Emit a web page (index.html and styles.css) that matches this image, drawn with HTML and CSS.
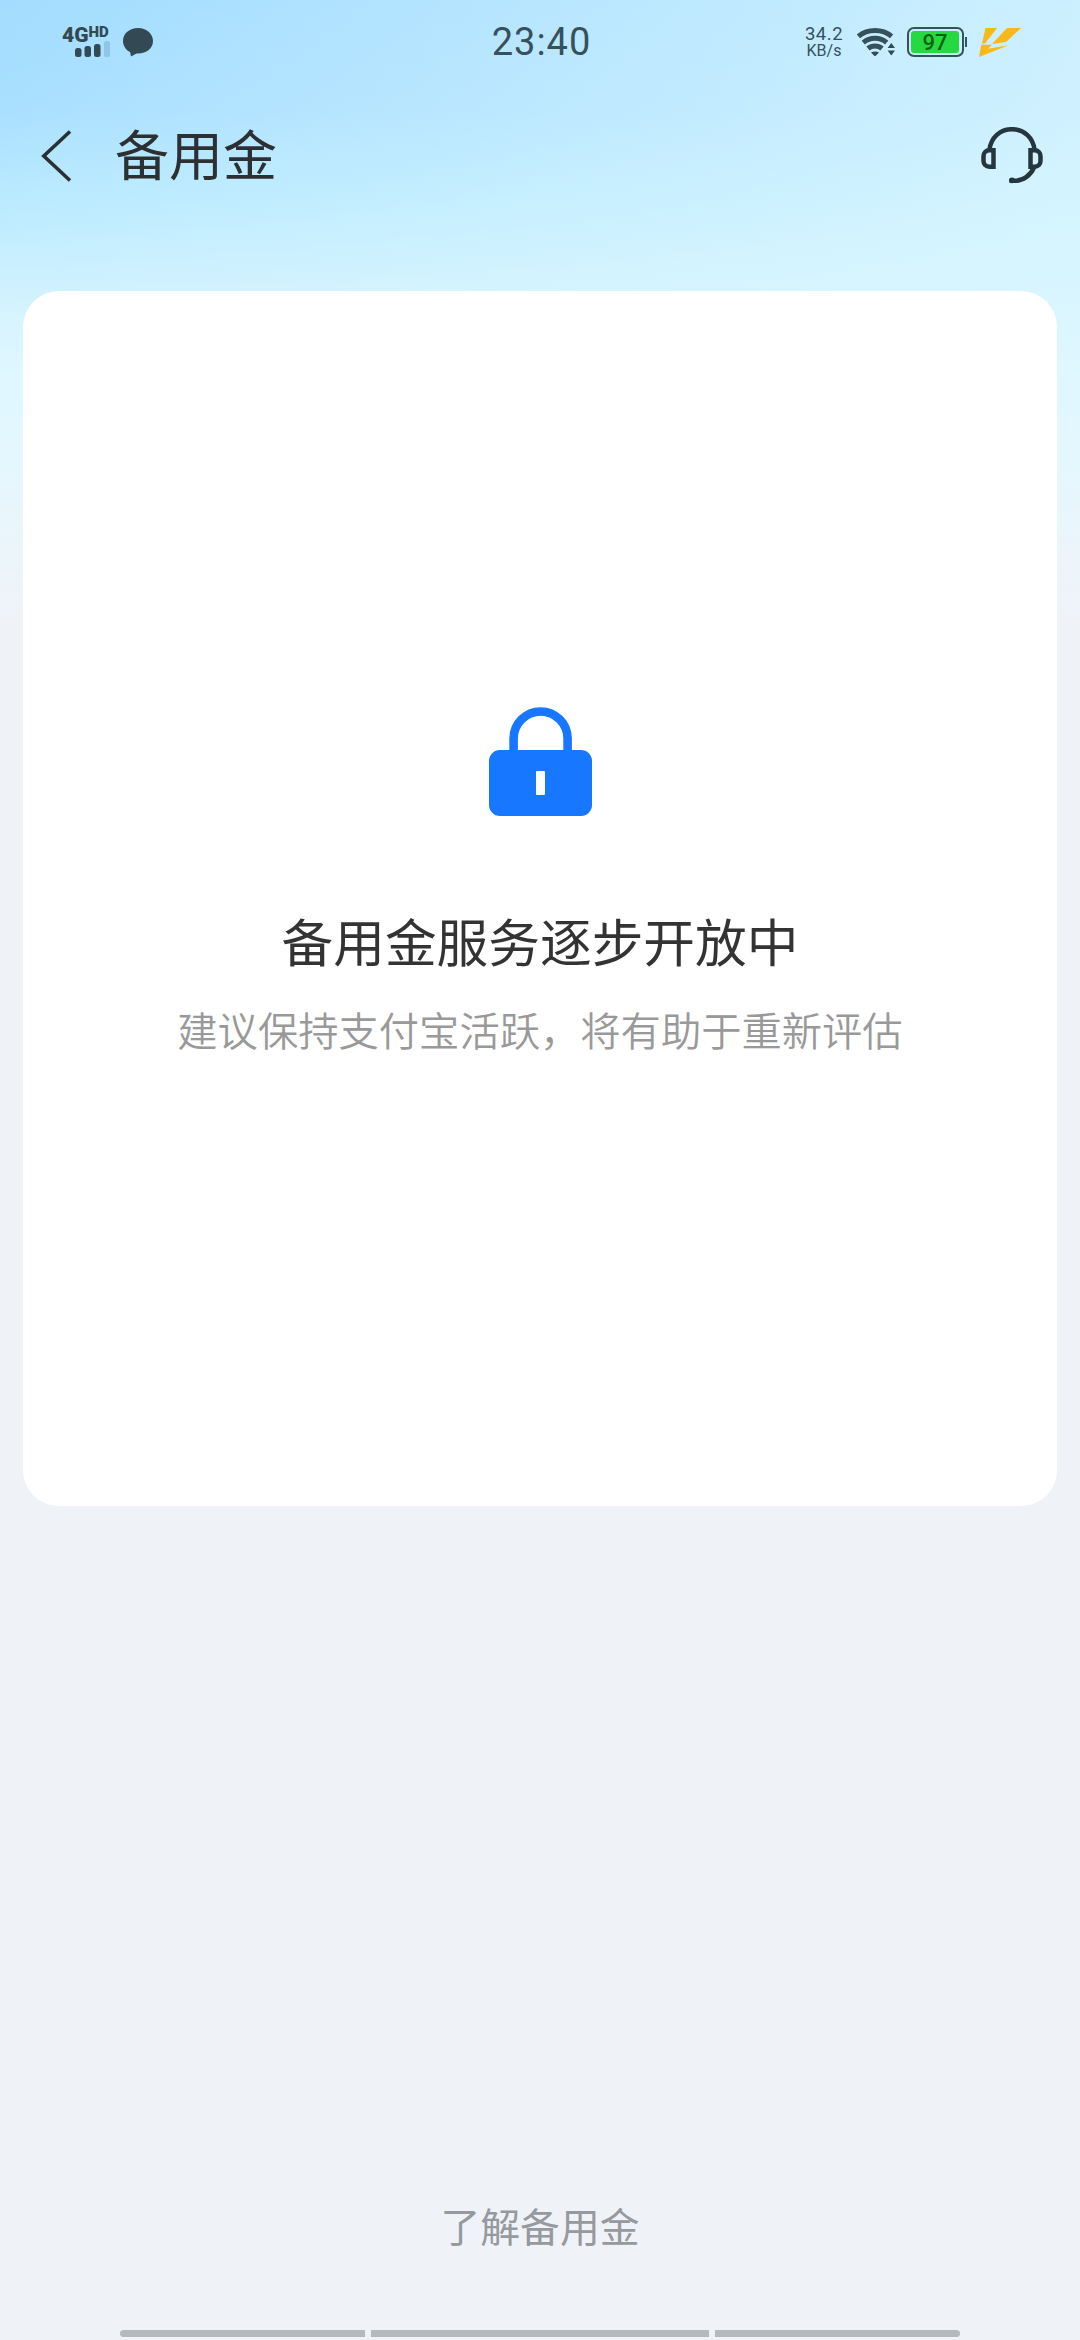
FILE: index.html
```
<!DOCTYPE html>
<html lang="zh-CN">
<head>
<meta charset="utf-8">
<title>备用金</title>
<link rel="stylesheet" href="styles.css">
</head>
<body>
<div class="screen">
  <header class="top">
    <div class="status">
      <div class="status-left">
        <div class="signal">
          <div class="network">4G<span class="hd">HD</span></div>
          <svg class="bars" width="36" height="17" viewBox="0 0 36 17">
            <rect x="0" y="7" width="6.500" height="9" rx="2.500"/>
            <rect x="9.500" y="5" width="6.500" height="11" rx="2.500"/>
            <rect x="19" y="3" width="6.500" height="13" rx="2.500"/>
            <rect class="bar-off" x="29" y="0" width="6" height="16" rx="2.500"/>
          </svg>
        </div>
        <svg class="bubble" width="30" height="29" viewBox="0 0 30 29">
          <path d="M15 0C6.500 0 0 5.500 0 13c0 4.800 2.800 9 7.200 11.200L8 28.500l5.500-3.100 1.500.1c8.500 0 15-5.200 15-12.500S23.500 0 15 0Z"/>
        </svg>
      </div>
      <div class="clock">23:40</div>
      <div class="status-right">
        <div class="speed"><span class="rate">34.2</span><span class="unit">KB/s</span></div>
        <svg class="wifi" width="38" height="28" viewBox="0 0 38 28">
          <g fill="none" stroke="#36505c" stroke-width="5">
            <path d="M1.400 8.400C10.500 .6 25.500 .6 34.600 8.400"/>
            <path d="M6.300 14.600c6.600-5.700 16.800-5.700 23.400 0"/>
            <path d="M11 20.500c4-3.500 10-3.500 14 0"/>
          </g>
          <path d="M14 24.600c2.500-1.500 5.500-1.500 8 0L18 28.500Z"/>
          <path d="M29.500 14.500h8.500V28h-8.500z" fill="#caefff"/>
          <path d="M34.300 15l3.700 5h-7.400ZM30.600 22.500H38l-3.700 5Z"/>
        </svg>
        <div class="battery"><div class="charge">97</div></div>
        <svg class="bolt" width="42" height="29" viewBox="0 0 42 29">
          <path d="M6.500 0H18L6 15.500H3ZM28 0H42L27 14 13 16ZM2.300 16.800H13L9 20.800 29.500 17.200 0 29Z"/>
        </svg>
      </div>
    </div>
    <nav class="navbar">
      <svg class="back" width="31" height="52" viewBox="0 0 31 52"><path d="M29 1.500 2.800 26 29 50.500"/></svg>
      <h1 class="title">备用金</h1>
      <svg class="service" width="62" height="58" viewBox="0 0 62 58">
        <path d="M8.500 22.500C10 10.500 19 2.200 31 2.200s21 8.300 22.500 20.300"/>
        <path d="M12.500 23.300v16.400H8.500c-3.800 0-6-2.500-6-6v-4.400c0-3.500 2.200-6 6-6ZM49.500 23.300v16.400h4c3.800 0 6-2.500 6-6v-4.400c0-3.500-2.200-6-6-6Z"/>
        <path d="M53 40.500c-3.500 8-11 13.200-19 13.200h-5.500"/>
        <circle class="mic" cx="31" cy="53.300" r="2.900"/>
      </svg>
    </nav>
  </header>
  <main class="card">
    <svg class="lock" width="103" height="109" viewBox="0 0 103 109">
      <path d="M24.600 46V31.500a27 27 0 0 1 54 0V46" fill="none" stroke="#1777ff" stroke-width="8.600"/>
      <rect y="43" width="103" height="66" rx="11" fill="#1777ff"/>
      <rect x="47" y="64" width="9" height="24" rx="1" fill="#fff"/>
    </svg>
    <h2 class="heading">备用金服务逐步开放中</h2>
    <p class="hint">建议保持支付宝活跃，将有助于重新评估</p>
  </main>
  <footer class="footer">
    <a class="learn">了解备用金</a>
    <div class="gestures"><i></i><i></i><i></i></div>
  </footer>
</div>
</body>
</html>
```
FILE: styles.css
```
* { box-sizing: border-box; margin: 0; padding: 0; }
body { font-family: "Noto Sans CJK SC", sans-serif; }
svg { display: block; flex: none; }

.screen {
  width: 1080px;
  height: 2340px;
  display: flex;
  flex-direction: column;
  overflow: hidden;
  background:
    linear-gradient(180deg, rgba(224, 247, 255, 0) 0, rgba(224, 247, 255, 0) 290px, #e0f7ff 400px, #e8f6fc 510px, #eff3f8 620px, #eff3f8 100%),
    linear-gradient(100deg, rgba(220, 247, 255, 0) 0, rgba(220, 247, 255, .75) 1080px),
    linear-gradient(180deg, #a2dcff 0, #a9dfff 110px, #b9eaff 200px, #cff1ff 290px, #dff7ff 400px);
}

.top { height: 291px; flex: none; }
.status {
  height: 84px;
  display: grid;
  grid-template-columns: 1fr auto 1fr;
  align-items: center;
  padding: 0 59px 0 62px;
  font-family: Roboto, sans-serif;
  color: #36505c;
  fill: #334a54;
}
.status-left { display: flex; gap: 13px; align-items: center; }
.signal { width: 48px; height: 34px; }
.network { display: flex; font: 900 21px/20px Roboto, sans-serif; color: #334a54; }
.hd { font-size: 15px; line-height: 14px; }
.bars { margin: -4px 0 0 13px; }
.bar-off { fill: #8fc5e5; }
.clock { font-size: 38px; line-height: 44px; letter-spacing: 1px; font-weight: 450; }
.status-right { display: flex; align-items: center; justify-content: flex-end; }
.speed { width: 40px; display: flex; flex-direction: column; align-items: center; margin-right: 13px; }
.rate { font-size: 18.500px; line-height: 17px; letter-spacing: .5px; }
.unit { font-size: 16px; line-height: 16px; }
.battery {
  position: relative;
  width: 57px;
  height: 30px;
  margin: 0 15px 0 12px;
  padding: 2px;
  border: 2px solid #36505c;
  border-radius: 7px;
}
.battery::after {
  content: "";
  position: absolute;
  right: -5px;
  top: 8px;
  width: 2px;
  height: 10px;
  background: #36505c;
}
.charge {
  width: 48px;
  height: 22px;
  border-radius: 3px;
  background: #27d941;
  color: #08630e;
  font: 500 22px/23px Roboto, sans-serif;
  text-align: center;
}
.bolt { fill: #f8b818; }

.navbar { display: flex; align-items: center; height: 144px; padding: 0 37px 0 41px; }
.back { fill: none; stroke: #2b3033; stroke-width: 3.600; }
.title { margin: -6px 0 0 43px; font-size: 54px; line-height: 80px; font-weight: 400; color: #2c3033; }
.service { margin-left: auto; fill: none; stroke: #26363f; stroke-width: 4.500; }
.mic { fill: #26363f; stroke: none; }

.card {
  flex: none;
  height: 1215px;
  margin: 0 23px;
  padding-top: 416px;
  border-radius: 36px;
  background: #fff;
  display: flex;
  flex-direction: column;
  align-items: center;
}
.heading { margin-top: 84px; font-size: 51.700px; line-height: 80px; font-weight: 400; color: #333; white-space: nowrap; }
.hint { margin-top: 19px; font-size: 40.300px; line-height: 60px; font-weight: 350; color: #999; white-space: nowrap; }

.footer {
  flex: 1;
  display: flex;
  flex-direction: column;
  align-items: center;
  justify-content: flex-end;
  padding-bottom: 3px;
}
.learn { font-size: 39.800px; line-height: 60px; color: #96999e; }
.gestures { width: 840px; margin-top: 75px; display: grid; grid-template-columns: 245px 338px 245px; gap: 6px; }
.gestures i { height: 7px; background: #b4b9be; }
.gestures i:first-child { border-radius: 4px 0 0 4px; }
.gestures i:last-child { border-radius: 0 4px 4px 0; }
```
